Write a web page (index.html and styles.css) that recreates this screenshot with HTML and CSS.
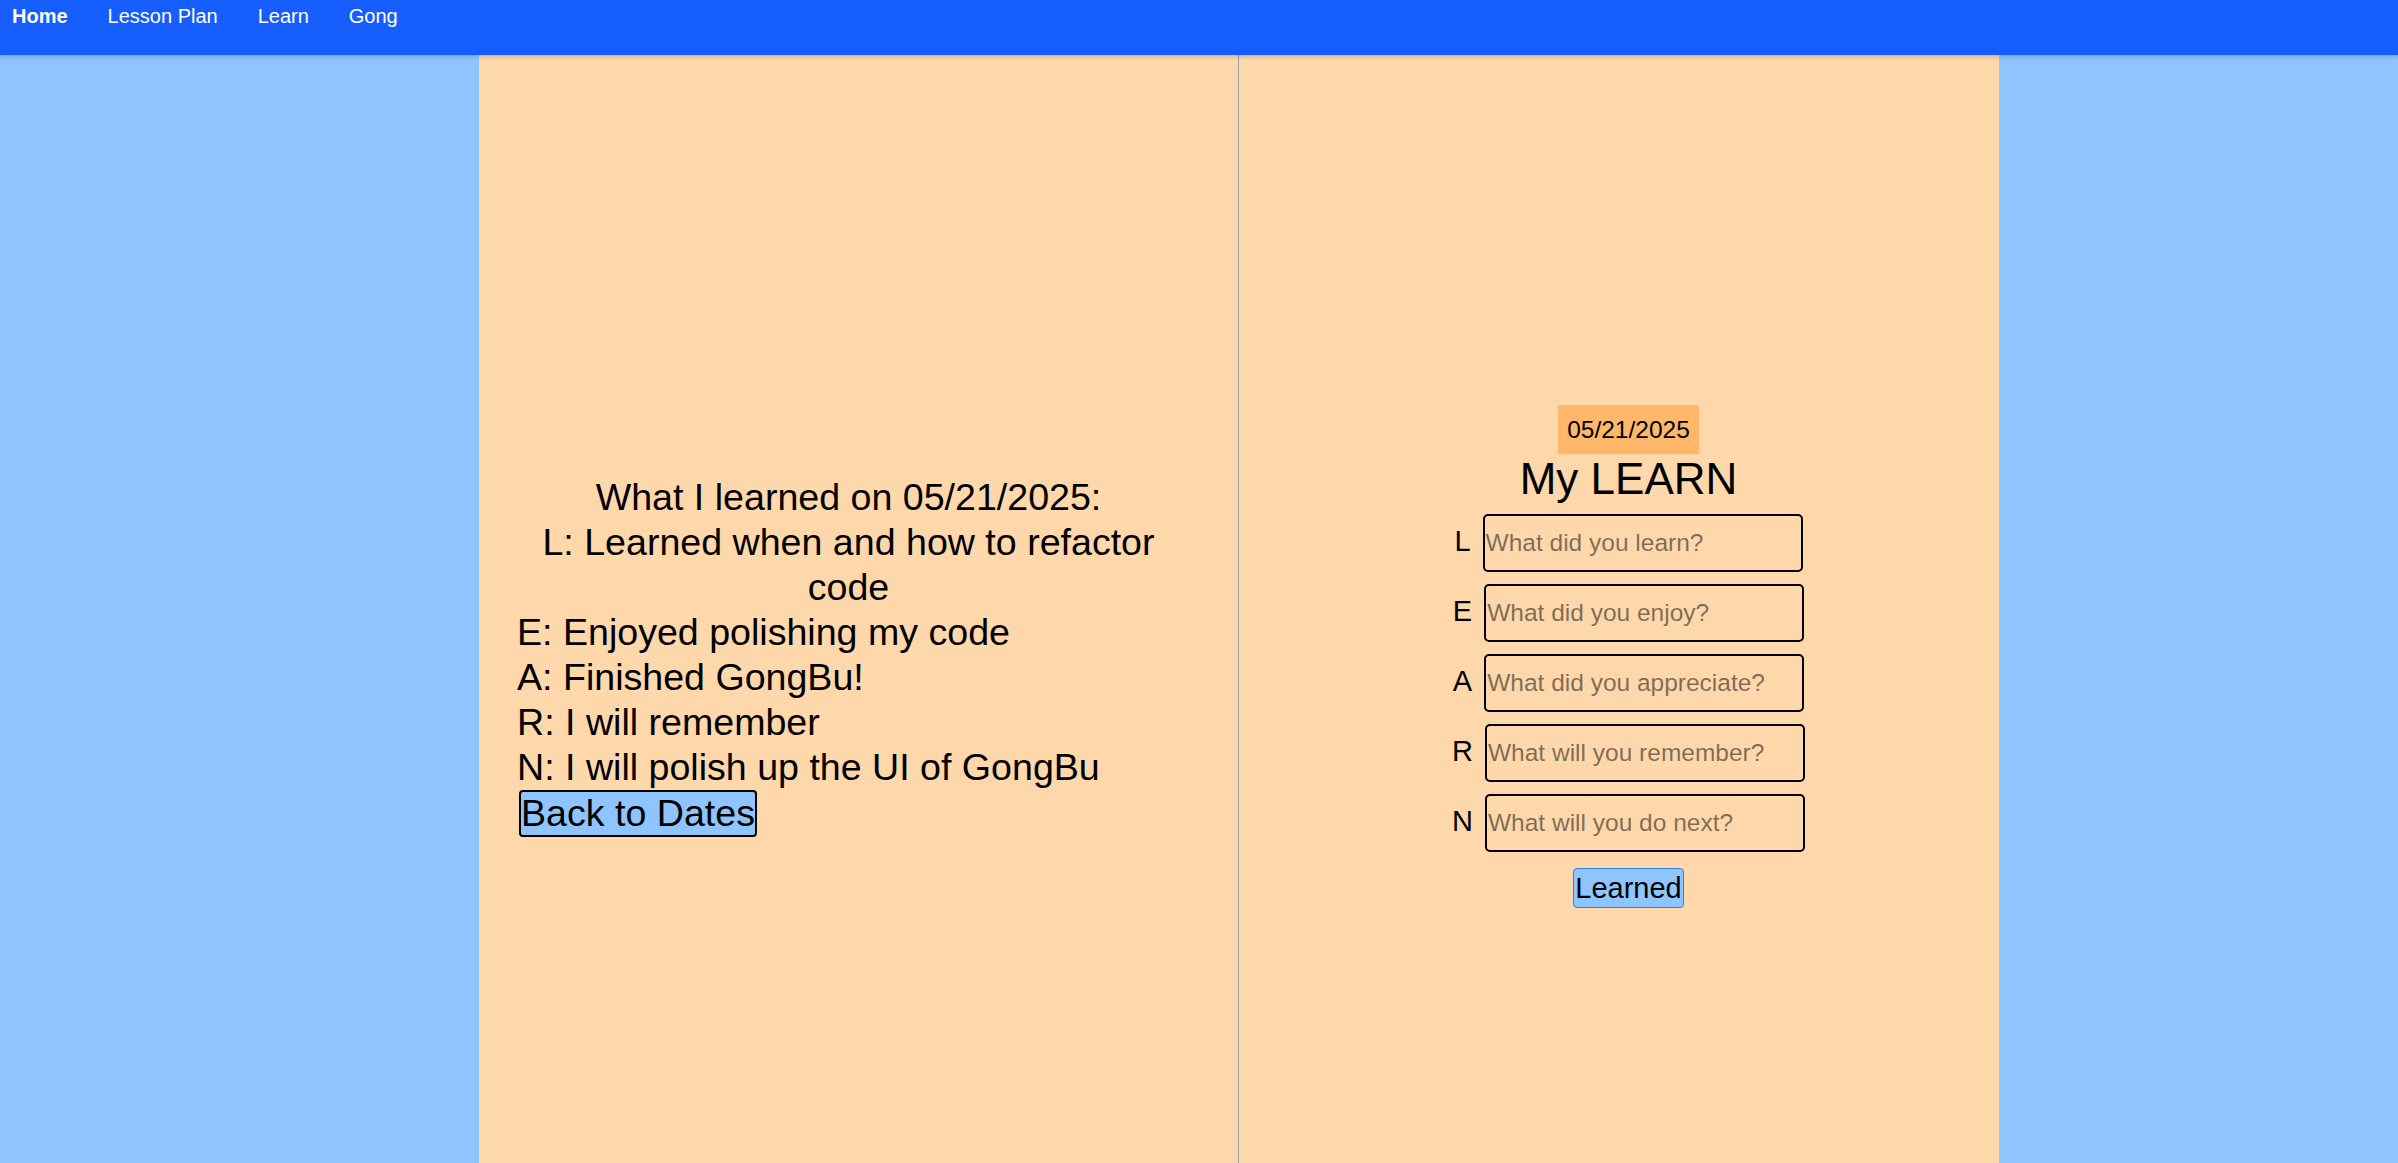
FILE: index.html
```
<!DOCTYPE html>
<html lang="en">
<head>
<meta charset="utf-8">
<title>GongBu</title>
<link rel="stylesheet" href="styles.css">
</head>
<body>
<nav class="topnav">
  <a class="nav-link nav-active" href="#">Home</a>
  <a class="nav-link" href="#">Lesson Plan</a>
  <a class="nav-link" href="#">Learn</a>
  <a class="nav-link" href="#">Gong</a>
</nav>
<main class="book">
  <section class="page page-left">
    <div class="entry">
      <p class="entry-line centered">What I learned on 05/21/2025:</p>
      <p class="entry-line centered">L: Learned when and how to refactor code</p>
      <p class="entry-line">E: Enjoyed polishing my code</p>
      <p class="entry-line">A: Finished GongBu!</p>
      <p class="entry-line">R: I will remember</p>
      <p class="entry-line">N: I will polish up the UI of GongBu</p>
      <button class="back-btn" type="button">Back to Dates</button>
    </div>
  </section>
  <section class="page page-right">
    <div class="learn-form">
      <div class="date-badge">05/21/2025</div>
      <h2 class="form-title">My LEARN</h2>
      <div class="rows">
        <div class="row"><span class="row-label">L</span><input class="row-input" placeholder="What did you learn?"></div>
        <div class="row"><span class="row-label">E</span><input class="row-input" placeholder="What did you enjoy?"></div>
        <div class="row"><span class="row-label">A</span><input class="row-input" placeholder="What did you appreciate?"></div>
        <div class="row"><span class="row-label">R</span><input class="row-input" placeholder="What will you remember?"></div>
        <div class="row"><span class="row-label">N</span><input class="row-input" placeholder="What will you do next?"></div>
      </div>
      <button class="learned-btn" type="button">Learned</button>
    </div>
  </section>
</main>
</body>
</html>
```
FILE: styles.css
```
* {
  box-sizing: border-box;
}

html, body {
  margin: 0;
  padding: 0;
}

body {
  background: #8ec5ff;
  font-family: "Liberation Sans", Arial, sans-serif;
  color: #000;
  overflow: hidden;
  height: 100vh;
}

.topnav {
  position: relative;
  z-index: 2;
  display: flex;
  gap: 40px;
  height: 55px;
  padding: 4px 12px 0;
  background: #155dfc;
  box-shadow: 0 2px 4px rgba(0, 0, 0, 0.18);
}

.nav-link {
  color: #fff;
  text-decoration: none;
  font-size: 20px;
  line-height: 24px;
}

.nav-active {
  font-weight: bold;
}

.book {
  display: flex;
  width: 1520px;
  margin-left: calc(50% - 720px);
  height: calc(100vh - 55px);
}

.page {
  width: 760px;
  background: #fed7aa;
  display: flex;
  flex-direction: column;
  justify-content: center;
  padding-top: 94px;
}

.page-left {
  border-right: 1px solid #9aa3b3;
  padding-left: 38px;
}

.page-right {
  padding-left: 19px;
  align-items: center;
}

.entry {
  width: 663px;
  display: flex;
  flex-direction: column;
  align-items: flex-start;
}

.entry-line {
  margin: 0;
  font-size: 37.6px;
  line-height: 45px;
  align-self: stretch;
}

.centered {
  text-align: center;
}

.back-btn {
  margin-left: 2px;
  font-family: inherit;
  font-size: 37.6px;
  line-height: 43px;
  padding: 0;
  color: #000;
  background: #8ec5ff;
  border: 2px solid #000;
  border-radius: 4px;
}

.learn-form {
  width: 100%;
  display: flex;
  flex-direction: column;
  align-items: center;
}

.date-badge {
  background: #ffb86a;
  font-size: 24.5px;
  line-height: 29px;
  padding: 10px 9px;
}

.form-title {
  margin: 0 0 10px;
  font-size: 44px;
  font-weight: normal;
  line-height: normal;
}

.rows {
  display: flex;
  flex-direction: column;
  align-items: center;
  gap: 12px;
}

.row {
  display: flex;
  align-items: center;
  gap: 12px;
}

.row-label {
  font-size: 29px;
  line-height: 33px;
  margin-top: -3px;
}

.row-input {
  width: 320px;
  height: 58px;
  border: 2px solid #000;
  border-radius: 5px;
  background: transparent;
  font-family: inherit;
  font-size: 24.5px;
  padding: 0 1px;
  color: #000;
}

.row-input::placeholder {
  color: rgba(0, 0, 0, 0.5);
}

.learned-btn {
  margin-top: 16px;
  font-family: inherit;
  font-size: 29px;
  line-height: 34px;
  padding: 2px 1.5px;
  color: #000;
  background: #8ec5ff;
  border: 1px solid #2b7fff;
  border-radius: 4px;
}
```
